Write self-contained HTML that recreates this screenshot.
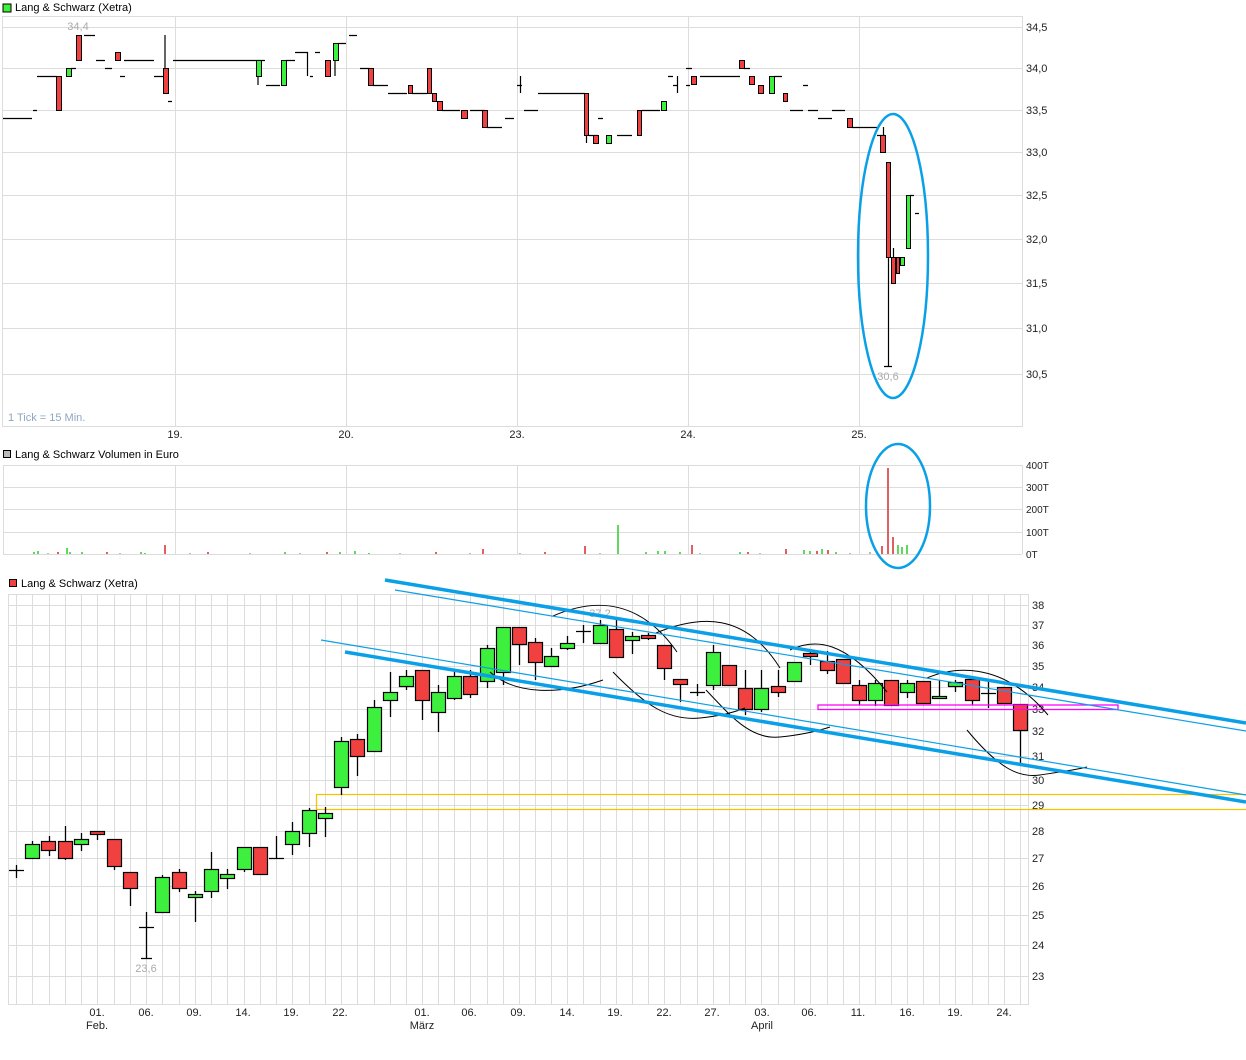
<!DOCTYPE html>
<html><head><meta charset="utf-8"><style>
html,body{margin:0;padding:0;background:#fff;}
svg{display:block;font-family:"Liberation Sans",sans-serif;}
</style></head><body>
<svg width="1246" height="1060" viewBox="0 0 1246 1060" xmlns="http://www.w3.org/2000/svg">
<!-- TOP CHART -->
<rect x="3" y="4" width="8" height="8" fill="#3ef03e" stroke="#000" stroke-width="1"/>
<text x="15" y="11" font-size="11" fill="#000">Lang &amp; Schwarz (Xetra)</text>
<g stroke="#dcdcdc" stroke-width="1" fill="none">
<rect x="2.5" y="16.5" width="1020" height="410"/>
<line x1="175.5" y1="16" x2="175.5" y2="426"/><line x1="346.5" y1="16" x2="346.5" y2="426"/>
<line x1="517.5" y1="16" x2="517.5" y2="426"/><line x1="688.5" y1="16" x2="688.5" y2="426"/>
<line x1="859.5" y1="16" x2="859.5" y2="426"/>
<line x1="3" y1="27.5" x2="1022" y2="27.5"/><line x1="3" y1="68.5" x2="1022" y2="68.5"/>
<line x1="3" y1="110.5" x2="1022" y2="110.5"/><line x1="3" y1="152.5" x2="1022" y2="152.5"/>
<line x1="3" y1="195.5" x2="1022" y2="195.5"/><line x1="3" y1="239.5" x2="1022" y2="239.5"/>
<line x1="3" y1="283.5" x2="1022" y2="283.5"/><line x1="3" y1="328.5" x2="1022" y2="328.5"/>
<line x1="3" y1="374.5" x2="1022" y2="374.5"/>
</g>
<g font-size="11" fill="#222">
<text x="1026" y="31">34,5</text><text x="1026" y="72">34,0</text><text x="1026" y="114">33,5</text>
<text x="1026" y="156">33,0</text><text x="1026" y="199">32,5</text><text x="1026" y="243">32,0</text>
<text x="1026" y="287">31,5</text><text x="1026" y="332">31,0</text><text x="1026" y="378">30,5</text>
</g>
<g font-size="11" fill="#222" text-anchor="middle">
<text x="175" y="438">19.</text><text x="346" y="438">20.</text><text x="517" y="438">23.</text>
<text x="688" y="438">24.</text><text x="859" y="438">25.</text>
</g>
<text x="8" y="421" font-size="11" fill="#8fa6c0">1 Tick = 15 Min.</text>
<text x="78" y="30" font-size="11" fill="#aaa" text-anchor="middle">34,4</text>
<text x="888" y="380" font-size="11" fill="#aaa" text-anchor="middle">30,6</text>
<g stroke="#000" stroke-width="1.2" fill="none">
<path d="M3 118.5H32M33 110.5H37M37 76.5H57M71 68.5H76M84 35.5H95M96 60.5H105M105 68.5H112M120 76.5H125M124 60.5H154M154 76.5H164M165 35V93M168 101.5H172M173 60.5H265M258 76V85M266 85.5H280M286 60.5H295M295 52.5H308M307.5 52V76M315 52.5H320M310 76.5H313M338 43.5H346M335 43V76M349 35.5H357M360 68.5H370M373 85.5H388M388 93.5H407M412 93.5H427M442 110.5H460M470 110.5H485M487 127.5H502M505 118.5H514M517 85.5H522M520.5 76V93M524 110.5H538M538 93.5H585M586.5 135V143M589 135.5H598M598 118.5H603M617 135.5H632M642 110.5H660M668 76.5H673M673 85.5H678M677.5 76V93M686 68.5H692M686 85.5H690M700 76.5H740M744 68.5H750M774 76.5H782M803 85.5H808M790 110.5H803M808 110.5H818M818 118.5H832M832 110.5H845M852 127.5H878M877 135.5H885M883.5 127V135M888.5 257V366M884 366.5H892M893.5 248V257M910 195.5H914M915 213.5H919"/>
</g>
<g stroke="#000" stroke-width="1">
<g fill="#f04040">
<rect x="56.5" y="76.5" width="5" height="34"/><rect x="76.5" y="35.5" width="5" height="25"/>
<rect x="115.5" y="52.5" width="5" height="8"/><rect x="163.5" y="68.5" width="5" height="25"/>
<rect x="325.5" y="60.5" width="5" height="16"/><rect x="368.5" y="68.5" width="5" height="17"/>
<rect x="408.5" y="85.5" width="4" height="8"/><rect x="427.5" y="68.5" width="4" height="25"/>
<rect x="432.5" y="93.5" width="4" height="8"/><rect x="437.5" y="101.5" width="5" height="9"/>
<rect x="461.5" y="110.5" width="6" height="8"/><rect x="482.5" y="110.5" width="5" height="17"/>
<rect x="584.5" y="93.5" width="4" height="42"/><rect x="593.5" y="135.5" width="5" height="8"/>
<rect x="637.5" y="110.5" width="4" height="25"/><rect x="691.5" y="76.5" width="5" height="8"/>
<rect x="739.5" y="60.5" width="5" height="8"/><rect x="749.5" y="76.5" width="5" height="8"/>
<rect x="758.5" y="85.5" width="5" height="8"/><rect x="783.5" y="93.5" width="4" height="8"/>
<rect x="847.5" y="118.5" width="5" height="9"/><rect x="880.5" y="135.5" width="5" height="17"/>
<rect x="886.5" y="162.5" width="4" height="95"/><rect x="891.5" y="257.5" width="4" height="26"/>
<rect x="896.5" y="257.5" width="3" height="16"/>
</g>
<g fill="#3ef03e">
<rect x="66.5" y="68.5" width="5" height="8"/><rect x="256.5" y="60.5" width="5" height="16"/>
<rect x="281.5" y="60.5" width="5" height="25"/><rect x="333.5" y="43.5" width="5" height="17"/>
<rect x="606.5" y="135.5" width="5" height="8"/><rect x="661.5" y="101.5" width="5" height="9"/>
<rect x="769.5" y="76.5" width="5" height="17"/><rect x="900.5" y="257.5" width="4" height="8"/>
<rect x="906.5" y="195.5" width="4" height="53"/>
</g>
</g>
<ellipse cx="893" cy="256" rx="35" ry="142" fill="none" stroke="#0aa0e8" stroke-width="2.5"/>

<!-- VOLUME -->
<rect x="3.5" y="450.5" width="7" height="7" fill="#bbb" stroke="#000"/>
<text x="15" y="458" font-size="11" fill="#000">Lang &amp; Schwarz Volumen in Euro</text>
<g stroke="#dcdcdc" stroke-width="1" fill="none">
<line x1="3" y1="465.5" x2="1022" y2="465.5"/><line x1="3" y1="487.5" x2="1022" y2="487.5"/>
<line x1="3" y1="509.5" x2="1022" y2="509.5"/><line x1="3" y1="532.5" x2="1022" y2="532.5"/>
<line x1="3" y1="554.5" x2="1022" y2="554.5"/>
<line x1="3.5" y1="465" x2="3.5" y2="554"/><line x1="175.5" y1="465" x2="175.5" y2="554"/>
<line x1="346.5" y1="465" x2="346.5" y2="554"/><line x1="517.5" y1="465" x2="517.5" y2="554"/>
<line x1="688.5" y1="465" x2="688.5" y2="554"/><line x1="859.5" y1="465" x2="859.5" y2="554"/>
<line x1="1022.5" y1="465" x2="1022.5" y2="554"/>
</g>
<g font-size="10" fill="#222">
<text x="1026" y="469">400T</text><text x="1026" y="491">300T</text><text x="1026" y="513">200T</text>
<text x="1026" y="536">100T</text><text x="1026" y="558">0T</text>
</g>
<g stroke-width="2">
<path stroke="#60d860" d="M34 554V552M38 554V551M67 554V548M70 554V552M82 554V552M141 554V552M145 554V553M285 554V552M340 554V552M355 554V551M369 554V553M618 554V525M646 554V552M658 554V551M665 554V551M680 554V552M740 554V552M804 554V550M810 554V551M822 554V549M836 554V552M898 554V545M902 554V547M907 554V545"/>
<path stroke="#e06060" d="M58 554V552M107 554V552M165 554V545M208 554V552M327 554V552M436 554V552M483 554V549M545 554V552M585 554V546M692 554V545M748 554V552M786 554V549M817 554V551M828 554V550M882 554V546M888 554V468M893 554V537"/>
<path stroke="#bbb" d="M48 554V553M120 554V553M190 554V553M250 554V553M300 554V553M400 554V553M470 554V553M520 554V553M600 554V553M700 554V553M760 554V553M850 554V553M870 554V552"/>
</g>
<ellipse cx="898" cy="506" rx="32" ry="62" fill="none" stroke="#0aa0e8" stroke-width="2.5"/>

<!-- BOTTOM CHART -->
<rect x="9.5" y="579.5" width="7" height="7" fill="#f04040" stroke="#000"/>
<text x="21" y="587" font-size="11" fill="#000">Lang &amp; Schwarz (Xetra)</text>
<g stroke="#dcdcdc" stroke-width="1" fill="none">
<rect x="8.5" y="594.5" width="1020" height="410"/>
<path d="M16.5 594V1004M32.5 594V1004M49.5 594V1004M65.5 594V1004M81.5 594V1004M97.5 594V1004M114.5 594V1004M130.5 594V1004M146.5 594V1004M162.5 594V1004M179.5 594V1004M195.5 594V1004M211.5 594V1004M227.5 594V1004M244.5 594V1004M260.5 594V1004M276.5 594V1004M292.5 594V1004M309.5 594V1004M325.5 594V1004M341.5 594V1004M357.5 594V1004M374.5 594V1004M390.5 594V1004M406.5 594V1004M422.5 594V1004M438.5 594V1004M454.5 594V1004M470.5 594V1004M487.5 594V1004M503.5 594V1004M519.5 594V1004M535.5 594V1004M551.5 594V1004M567.5 594V1004M583.5 594V1004M600.5 594V1004M616.5 594V1004M632.5 594V1004M648.5 594V1004M664.5 594V1004M680.5 594V1004M697.5 594V1004M713.5 594V1004M729.5 594V1004M745.5 594V1004M761.5 594V1004M778.5 594V1004M794.5 594V1004M810.5 594V1004M827.5 594V1004M843.5 594V1004M859.5 594V1004M875.5 594V1004M891.5 594V1004M907.5 594V1004M923.5 594V1004M939.5 594V1004M955.5 594V1004M972.5 594V1004M988.5 594V1004M1004.5 594V1004M1020.5 594V1004"/>
<path d="M8 605.5H1028M8 625.5H1028M8 645.5H1028M8 666.5H1028M8 687.5H1028M8 709.5H1028M8 731.5H1028M8 756.5H1028M8 780.5H1028M8 805.5H1028M8 831.5H1028M8 858.5H1028M8 886.5H1028M8 915.5H1028M8 945.5H1028M8 976.5H1028"/>
</g>
<g font-size="11" fill="#222">
<text x="1032" y="609">38</text><text x="1032" y="629">37</text><text x="1032" y="649">36</text>
<text x="1032" y="670">35</text><text x="1032" y="691">34</text><text x="1032" y="713">33</text>
<text x="1032" y="735">32</text><text x="1032" y="760">31</text><text x="1032" y="784">30</text>
<text x="1032" y="809">29</text><text x="1032" y="835">28</text><text x="1032" y="862">27</text>
<text x="1032" y="890">26</text><text x="1032" y="919">25</text><text x="1032" y="949">24</text>
<text x="1032" y="980">23</text>
</g>
<g font-size="11" fill="#222" text-anchor="middle">
<text x="97" y="1016">01.</text><text x="97" y="1029">Feb.</text><text x="146" y="1016">06.</text>
<text x="194" y="1016">09.</text><text x="243" y="1016">14.</text><text x="291" y="1016">19.</text>
<text x="340" y="1016">22.</text><text x="422" y="1016">01.</text><text x="422" y="1029">März</text>
<text x="469" y="1016">06.</text><text x="518" y="1016">09.</text><text x="567" y="1016">14.</text>
<text x="615" y="1016">19.</text><text x="664" y="1016">22.</text><text x="712" y="1016">27.</text>
<text x="762" y="1016">03.</text><text x="762" y="1029">April</text><text x="809" y="1016">06.</text>
<text x="858" y="1016">11.</text><text x="907" y="1016">16.</text><text x="955" y="1016">19.</text>
<text x="1004" y="1016">24.</text>
</g>
<text x="146" y="972" font-size="11" fill="#aaa" text-anchor="middle">23,6</text>
<text x="600" y="617" font-size="11" fill="#aaa" text-anchor="middle">37,2</text>
<path d="M316.5 809.5V794.5H1246M316.5 809.5H1246" stroke="#f5c400" stroke-width="1.3" fill="none"/>
<g stroke="#000" stroke-width="1.3" fill="none">
<path d="M16.5 865V878M9 870.5H24M32.5 841V858M49.5 836V856M65.5 826V860M81.5 833V851M97.5 831V840M114.5 839V870M130.5 872V906M146.5 912V958M139 927.5H154M141 958.5H152M162.5 875V912M179.5 869V892M195.5 891V922M211.5 852V898M227.5 869V889M244.5 847V872M260.5 847V874M276.5 836V858M269 858.5H284M292.5 822V855M309.5 808V847M325.5 807V837M341.5 737V795M357.5 734V776M374.5 700V751M390.5 672V717M406.5 670V690M422.5 670V720M438.5 685V732M454.5 670V700M470.5 670V698M487.5 645V688M503.5 627V685M519.5 627V665M535.5 638V680M551.5 648V666M567.5 636V650M583.5 625V643M576 631.5H591M600.5 620V643M616.5 620V657M632.5 632V654M648.5 633V640M664.5 645V680M680.5 679V702M697.5 684V696M690 692.5H705M713.5 645V690M729.5 665V685M745.5 670V715M761.5 670V712M778.5 670V697M794.5 662V681M810.5 650V665M827.5 651V674M843.5 659V683M859.5 680V705M875.5 680V706M891.5 680V705M907.5 680V698M923.5 681V703M939.5 680V698M955.5 680V692M972.5 679V705M988.5 680V708M981 693.5H996M1004.5 687V703M1020.5 704V763"/>
</g>
<g stroke="#000" stroke-width="1.2">
<g fill="#3ef03e">
<rect x="25.5" y="844.5" width="14" height="14"/><rect x="74.5" y="839.5" width="14" height="5"/>
<rect x="155.5" y="877.5" width="14" height="35"/><rect x="188.5" y="894.5" width="14" height="3"/>
<rect x="204.5" y="869.5" width="14" height="22"/><rect x="220.5" y="874.5" width="14" height="4"/>
<rect x="237.5" y="847.5" width="14" height="22"/><rect x="285.5" y="831.5" width="14" height="13"/>
<rect x="302.5" y="810.5" width="14" height="23"/><rect x="318.5" y="813.5" width="14" height="5"/>
<rect x="334.5" y="741.5" width="14" height="46"/><rect x="367.5" y="707.5" width="14" height="44"/>
<rect x="383.5" y="692.5" width="14" height="8"/><rect x="399.5" y="676.5" width="14" height="10"/>
<rect x="431.5" y="692.5" width="14" height="20"/><rect x="447.5" y="676.5" width="14" height="22"/>
<rect x="480.5" y="648.5" width="14" height="33"/><rect x="496.5" y="627.5" width="14" height="45"/>
<rect x="544.5" y="656.5" width="14" height="10"/><rect x="560.5" y="643.5" width="14" height="5"/>
<rect x="593.5" y="625.5" width="14" height="18"/><rect x="625.5" y="636.5" width="14" height="4"/>
<rect x="706.5" y="652.5" width="14" height="33"/><rect x="754.5" y="688.5" width="14" height="21"/>
<rect x="787.5" y="662.5" width="14" height="19"/><rect x="868.5" y="683.5" width="14" height="17"/>
<rect x="900.5" y="683.5" width="14" height="9"/><rect x="932.5" y="696.5" width="14" height="2"/>
<rect x="948.5" y="682.5" width="14" height="4"/>
</g>
<g fill="#f04040">
<rect x="41.5" y="841.5" width="14" height="9"/><rect x="58.5" y="841.5" width="14" height="17"/>
<rect x="90.5" y="831.5" width="14" height="3"/><rect x="107.5" y="839.5" width="14" height="27"/>
<rect x="123.5" y="872.5" width="14" height="16"/><rect x="172.5" y="872.5" width="14" height="16"/>
<rect x="253.5" y="847.5" width="14" height="27"/><rect x="350.5" y="739.5" width="14" height="17"/>
<rect x="415.5" y="670.5" width="14" height="30"/><rect x="463.5" y="676.5" width="14" height="18"/>
<rect x="512.5" y="627.5" width="14" height="17"/><rect x="528.5" y="642.5" width="14" height="20"/>
<rect x="609.5" y="629.5" width="14" height="28"/><rect x="641.5" y="635.5" width="14" height="3"/>
<rect x="657.5" y="645.5" width="14" height="23"/><rect x="673.5" y="679.5" width="14" height="5"/>
<rect x="722.5" y="665.5" width="14" height="20"/><rect x="738.5" y="688.5" width="14" height="21"/>
<rect x="771.5" y="686.5" width="14" height="6"/><rect x="803.5" y="653.5" width="14" height="3"/>
<rect x="820.5" y="661.5" width="14" height="9"/><rect x="836.5" y="659.5" width="14" height="24"/>
<rect x="852.5" y="685.5" width="14" height="15"/><rect x="884.5" y="680.5" width="14" height="25"/>
<rect x="916.5" y="681.5" width="14" height="22"/><rect x="965.5" y="679.5" width="14" height="21"/>
<rect x="997.5" y="687.5" width="14" height="16"/><rect x="1013.5" y="704.5" width="14" height="26"/>
</g>
</g>
<rect x="818" y="705" width="300" height="4.5" fill="none" stroke="#ff00ff" stroke-width="1.3"/>
<g stroke="#000" stroke-width="1" fill="none">
<path d="M553 616C585 602 635 592 677 652"/>
<path d="M490 672C515 695 560 695 603 680"/>
<path d="M613 672C645 705 668 721 700 718C720 716 735 712 745 708"/>
<path d="M656 633C700 615 745 612 780 668"/>
<path d="M706 690C730 715 750 740 780 737C800 735 815 732 830 727"/>
<path d="M790 650C815 638 845 640 887 692"/>
<path d="M927 678C950 668 1000 658 1048 715"/>
<path d="M967 730C1000 770 1020 778 1040 775C1060 772 1075 770 1087 767"/>
</g>
<g stroke="#0aa0e8" fill="none">
<line x1="385" y1="580" x2="1246" y2="723" stroke-width="3.5"/>
<line x1="345" y1="652" x2="1246" y2="802" stroke-width="3.5"/>
<line x1="395" y1="590" x2="1246" y2="731" stroke-width="1.2"/>
<line x1="321" y1="640" x2="1246" y2="795" stroke-width="1.2"/>
</g>
</svg>
</body></html>
